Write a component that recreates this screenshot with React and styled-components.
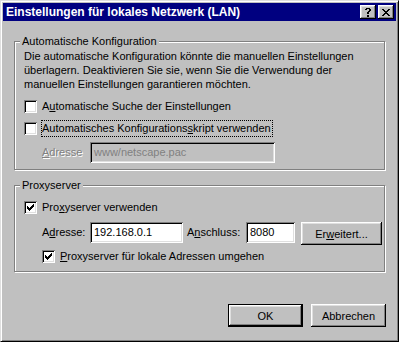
import React from 'react';
import styled, { createGlobalStyle } from 'styled-components';

const GlobalStyle = createGlobalStyle`
  html, body {
    margin: 0;
    padding: 0;
    background: #c0c0c0;
  }
  body {
    font-family: "Liberation Sans", Arial, sans-serif;
    font-size: 11px;
    color: #000;
  }
`;

// pixel patterns for the little win98 glyphs
const CHECK = ['......#', '.....##', '#...###', '##.###.', '#####..', '.###...', '..#....'];
const CLOSE = ['##....##', '.##..##.', '..####..', '...##...', '..####..', '.##..##.', '##....##'];
const HELP = ['..####..', '.##..##.', '.....##.', '....##..', '...##...', '...##...', '........', '...##...', '...##...'];

const BEVEL =
  'inset -1px -1px 0 #000, inset 1px 1px 0 #fff, inset -2px -2px 0 #808080, inset 2px 2px 0 #dfdfdf';
const SUNKEN =
  'inset 1px 1px 0 #808080, inset -1px -1px 0 #fff, inset 2px 2px 0 #000, inset -2px -2px 0 #dfdfdf';

const Pixels = ({ rows, color = '#000' }) => (
  <PixelSvg width={rows[0].length} height={rows.length} shapeRendering="crispEdges">
    {rows.flatMap((r, y) =>
      [...r].map((c, x) =>
        c === '#' ? <rect key={`${x}-${y}`} x={x} y={y} width="1" height="1" fill={color} /> : null
      )
    )}
  </PixelSvg>
);

const Window = styled.div`
  box-sizing: border-box;
  width: 399px;
  height: 342px;
  display: flex;
  flex-direction: column;
  background: #c0c0c0;
  border: 1px solid;
  border-color: #dfdfdf #000 #000 #dfdfdf;
  box-shadow: inset 1px 1px 0 #fff, inset -1px -1px 0 #808080;
  padding: 2px;
`;

const TitleBar = styled.div`
  height: 18px;
  display: flex;
  align-items: center;
  padding: 0 2px 0 3px;
  background: #000080;
  color: #fff;
  font-weight: bold;
  font-size: 12px;
`;

const TitleText = styled.div`
  flex: 1;
  white-space: nowrap;
`;

const TitleButtons = styled.div`
  display: flex;
  gap: 2px;
`;

const TitleButton = styled.div`
  box-sizing: border-box;
  width: 16px;
  height: 14px;
  display: flex;
  align-items: center;
  justify-content: center;
  padding-top: ${p => p.$top || 0}px;
  background: #c0c0c0;
  box-shadow: ${BEVEL};
`;

const PixelSvg = styled.svg`
  display: block;
`;

const Body = styled.div`
  flex: 1;
  display: flex;
  flex-direction: column;
  padding: 20px 11px 0 11px;
`;

const Group = styled.div`
  position: relative;
  display: flex;
  flex-direction: column;
  border: 1px solid #808080;
  box-shadow: inset 1px 1px 0 #fff, 1px 1px 0 #fff;
  padding: ${p => p.$pad};
  margin-bottom: ${p => p.$mb || 0}px;
`;

const Legend = styled.div`
  position: absolute;
  top: -7px;
  left: 5px;
  padding: 0 2px;
  line-height: 13px;
  background: #c0c0c0;
`;

const Paragraph = styled.p`
  margin: 0 0 7px;
  line-height: 14px;
`;

const Row = styled.div`
  display: flex;
  align-items: ${p => p.$align || 'center'};
  height: ${p => p.$h || 17}px;
  margin-top: ${p => p.$mt || 0}px;
  padding-left: ${p => p.$indent || 0}px;
`;

const CheckBox = styled.span`
  box-sizing: border-box;
  width: 13px;
  height: 13px;
  flex: none;
  padding: 3px;
  margin-right: 4px;
  background: #fff;
  box-shadow: ${SUNKEN};
`;

const CheckLabel = styled.span`
  line-height: 15px;
  border: 1px dotted ${p => (p.$focus ? '#000' : 'transparent')};
  padding-right: 1px;
  white-space: nowrap;
`;

const FieldLabel = styled.span`
  width: ${p => p.$w}px;
  margin-left: ${p => p.$ml || 0}px;
  flex: none;
  line-height: 21px;
  white-space: nowrap;
  color: ${p => (p.$disabled ? '#808080' : '#000')};
  text-shadow: ${p => (p.$disabled ? '1px 1px 0 #fff' : 'none')};
`;

const TextBox = styled.div`
  box-sizing: border-box;
  width: ${p => p.$w}px;
  height: 21px;
  flex: none;
  padding: 0 4px;
  line-height: 21px;
  white-space: nowrap;
  overflow: hidden;
  background: ${p => (p.$disabled ? '#c0c0c0' : '#fff')};
  color: ${p => (p.$disabled ? '#808080' : '#000')};
  box-shadow: ${SUNKEN};
`;

const Button = styled.div`
  box-sizing: border-box;
  width: ${p => p.$w || 75}px;
  height: 23px;
  flex: none;
  margin-left: ${p => p.$ml || 0}px;
  display: flex;
  align-items: center;
  justify-content: center;
  background: #c0c0c0;
  border: ${p => (p.$default ? '1px solid #000' : 'none')};
  box-shadow: ${BEVEL};
`;

const Footer = styled.div`
  display: flex;
  justify-content: flex-end;
  margin-top: 32px;
  margin-right: -1px;
`;

const Check = ({ checked }) => <CheckBox>{checked && <Pixels rows={CHECK} />}</CheckBox>;

const App = () => {
  return (
    <>
      <GlobalStyle />
      <Window>
        <TitleBar>
          <TitleText>Einstellungen für lokales Netzwerk (LAN)</TitleText>
          <TitleButtons>
            <TitleButton $top={1}>
              <Pixels rows={HELP} />
            </TitleButton>
            <TitleButton>
              <Pixels rows={CLOSE} />
            </TitleButton>
          </TitleButtons>
        </TitleBar>
        <Body>
          <Group $pad="7px 9px 6px" $mb={15}>
            <Legend>Automatische Konfiguration</Legend>
            <Paragraph>
              Die automatische Konfiguration könnte die manuellen Einstellungen
              <br />
              überlagern. Deaktivieren Sie sie, wenn Sie die Verwendung der
              <br />
              manuellen Einstellungen garantieren möchten.
            </Paragraph>
            <Row>
              <Check />
              <CheckLabel>
                A<u>u</u>tomatische Suche der Einstellungen
              </CheckLabel>
            </Row>
            <Row $mt={5}>
              <Check />
              <CheckLabel $focus>
                Automatisches Konfigurations<u>s</u>kript verwenden
              </CheckLabel>
            </Row>
            <Row $mt={5} $h={21}>
              <FieldLabel $w={48} $ml={18} $disabled>
                <u>A</u>dresse
              </FieldLabel>
              <TextBox $w={185} $disabled>
                www/netscape.pac
              </TextBox>
            </Row>
          </Group>
          <Group $pad="13px 9px 6px">
            <Legend>Proxyserver</Legend>
            <Row>
              <Check checked />
              <CheckLabel>
                Pro<u>x</u>yserver verwenden
              </CheckLabel>
            </Row>
            <Row $mt={6} $h={23} $align="flex-start">
              <FieldLabel $w={48} $ml={18}>
                A<u>d</u>resse:
              </FieldLabel>
              <TextBox $w={93}>192.168.0.1</TextBox>
              <FieldLabel $w={59} $ml={4}>
                A<u>n</u>schluss:
              </FieldLabel>
              <TextBox $w={49}>8080</TextBox>
              <Button $w={81} $ml={6}>
                Er<u>w</u>eitert...
              </Button>
            </Row>
            <Row $mt={3} $indent={18}>
              <Check checked />
              <CheckLabel>
                <u>P</u>roxyserver für lokale Adressen umgehen
              </CheckLabel>
            </Row>
          </Group>
          <Footer>
            <Button $default>OK</Button>
            <Button $ml={8}>Abbrechen</Button>
          </Footer>
        </Body>
      </Window>
    </>
  );
};

export default App;
